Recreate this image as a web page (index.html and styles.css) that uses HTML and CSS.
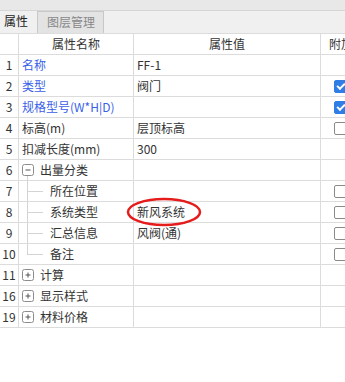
FILE: index.html
```html
<!DOCTYPE html>
<html lang="zh-CN">
<head>
    <meta charset="UTF-8">
    <title>属性</title>
    <link rel="stylesheet" href="styles.css">
</head>
<body>
    <div class="panel">
        <div class="topbar"></div>
        <div class="tabs">
            <div class="tab active">属性</div>
            <div class="tab">图层管理</div>
        </div>

        <div class="grid">
            <div class="row head">
                <div class="cell num"></div>
                <div class="cell name">属性名称</div>
                <div class="cell val">属性值</div>
                <div class="cell extra">附加</div>
            </div>
            <div class="row">
                <div class="cell num">1</div>
                <div class="cell name link">名称</div>
                <div class="cell val">FF-1</div>
                <div class="cell extra"></div>
            </div>
            <div class="row">
                <div class="cell num">2</div>
                <div class="cell name link">类型</div>
                <div class="cell val">阀门</div>
                <div class="cell extra"><span class="check on"></span></div>
            </div>
            <div class="row">
                <div class="cell num">3</div>
                <div class="cell name link">规格型号(W*H|D)</div>
                <div class="cell val"></div>
                <div class="cell extra"><span class="check on"></span></div>
            </div>
            <div class="row">
                <div class="cell num">4</div>
                <div class="cell name">标高(m)</div>
                <div class="cell val">层顶标高</div>
                <div class="cell extra"><span class="check"></span></div>
            </div>
            <div class="row">
                <div class="cell num">5</div>
                <div class="cell name">扣减长度(mm)</div>
                <div class="cell val">300</div>
                <div class="cell extra"></div>
            </div>
            <div class="row">
                <div class="cell num">6</div>
                <div class="cell name group">
                    <span class="toggle open">
                        <svg width="12" height="12" viewBox="0 0 12 12"><rect x="0.5" y="0.5" width="11" height="11" rx="2" fill="#fff" stroke="#8c8c8c"/><path d="M3.5 6h5" stroke="#555" stroke-width="1"/></svg>
                    </span>出量分类
                </div>
                <div class="cell val"></div>
                <div class="cell extra"></div>
            </div>
            <div class="row">
                <div class="cell num">7</div>
                <div class="cell name child">所在位置</div>
                <div class="cell val"></div>
                <div class="cell extra"><span class="check"></span></div>
            </div>
            <div class="row marked">
                <div class="cell num">8</div>
                <div class="cell name child">系统类型</div>
                <div class="cell val">新风系统</div>
                <div class="cell extra"><span class="check"></span></div>
            </div>
            <div class="row">
                <div class="cell num">9</div>
                <div class="cell name child">汇总信息</div>
                <div class="cell val">风阀(通)</div>
                <div class="cell extra"><span class="check"></span></div>
            </div>
            <div class="row">
                <div class="cell num">10</div>
                <div class="cell name child last">备注</div>
                <div class="cell val"></div>
                <div class="cell extra"><span class="check"></span></div>
            </div>
            <div class="row">
                <div class="cell num">11</div>
                <div class="cell name group">
                    <span class="toggle">
                        <svg width="12" height="12" viewBox="0 0 12 12"><rect x="0.5" y="0.5" width="11" height="11" rx="2" fill="#fff" stroke="#8c8c8c"/><path d="M3.5 6h5M6 3.5v5" stroke="#555" stroke-width="1"/></svg>
                    </span>计算
                </div>
                <div class="cell val"></div>
                <div class="cell extra"></div>
            </div>
            <div class="row">
                <div class="cell num">16</div>
                <div class="cell name group">
                    <span class="toggle">
                        <svg width="12" height="12" viewBox="0 0 12 12"><rect x="0.5" y="0.5" width="11" height="11" rx="2" fill="#fff" stroke="#8c8c8c"/><path d="M3.5 6h5M6 3.5v5" stroke="#555" stroke-width="1"/></svg>
                    </span>显示样式
                </div>
                <div class="cell val"></div>
                <div class="cell extra"></div>
            </div>
            <div class="row">
                <div class="cell num">19</div>
                <div class="cell name group">
                    <span class="toggle">
                        <svg width="12" height="12" viewBox="0 0 12 12"><rect x="0.5" y="0.5" width="11" height="11" rx="2" fill="#fff" stroke="#8c8c8c"/><path d="M3.5 6h5M6 3.5v5" stroke="#555" stroke-width="1"/></svg>
                    </span>材料价格
                </div>
                <div class="cell val"></div>
                <div class="cell extra"></div>
            </div>
        </div>

        <!-- red mark around 新风系统 -->
        <svg class="mark" width="76" height="30" viewBox="0 0 76 30">
            <ellipse cx="38" cy="15" rx="36" ry="13" fill="none" stroke="#e51c1c" stroke-width="2.5"/>
        </svg>
    </div>
</body>
</html>
```

FILE: styles.css
```css
body {
    margin: 0;
    background-color: #fff;
    font-family: "Noto Sans CJK SC", "Noto Sans", sans-serif;
    font-size: 12px;
    color: #333;
}
.panel {
    position: relative;
    width: 345px;
    height: 382px;
    overflow: hidden;
}
.topbar {
    height: 10px;
    background-color: #e8e8e8;
    border-bottom: 1px solid #d6d6d6;
}
.tabs {
    display: flex;
    height: 22px;
    background-color: #f0f0f0;
    border-bottom: 1px solid #dcdcdc;
}
.tab {
    box-sizing: border-box;
    height: 22px;
    line-height: 20px;
    padding: 0 8px 0 9px;
    color: #888;
    background-color: #e3e3e3;
    border: 1px solid #c8c8c8;
    border-bottom: none;
}
.tab.active {
    width: 37px;
    padding: 0 0 0 4px;
    color: #222;
    background-color: #f0f0f0;
    border: none;
}
.grid {
    width: 400px;
}
.row {
    display: grid;
    grid-template-columns: 19px 115px 187px 79px;
    height: 21px;
    box-sizing: border-box;
    border-bottom: 1px solid #dcdcdc;
}
.cell {
    box-sizing: border-box;
    border-right: 1px solid #dcdcdc;
    display: flex;
    align-items: center;
    white-space: nowrap;
    line-height: 20px;
}
.num {
    justify-content: center;
    color: #333;
}
.name {
    padding-left: 3px;
}
.val {
    padding-left: 3px;
}
.extra {
    padding-left: 13px;
    border-right: none;
}
.head .name,
.head .val {
    justify-content: center;
    padding-left: 0;
}
.head .extra {
    padding-left: 8px;
}
.link {
    color: #3a5fe8;
}
.toggle {
    display: inline-flex;
    margin-right: 6px;
    position: relative;
}
.toggle.open::after {
    content: "";
    position: absolute;
    left: 5px;
    top: 12px;
    width: 1px;
    height: 6px;
    background-color: #d4d4d4;
}
.child {
    position: relative;
    padding-left: 31px;
}
.child::before {
    content: "";
    position: absolute;
    left: 8px;
    top: 0;
    bottom: 0;
    width: 1px;
    background-color: #d4d4d4;
}
.child.last::before {
    bottom: 50%;
}
.child::after {
    content: "";
    position: absolute;
    left: 8px;
    top: 10px;
    width: 16px;
    height: 1px;
    background-color: #d4d4d4;
}
.check {
    box-sizing: border-box;
    width: 13px;
    height: 13px;
    border: 1px solid #8a8a8a;
    border-radius: 2px;
    background-color: #fff;
    position: relative;
}
.check.on {
    border-color: #2f7ee6;
    background-color: #2f7ee6;
}
.check.on::after {
    content: "";
    position: absolute;
    left: 2px;
    top: 2px;
    width: 6px;
    height: 3px;
    border-left: 2px solid #fff;
    border-bottom: 2px solid #fff;
    transform: rotate(-45deg);
}
.mark {
    position: absolute;
    left: 126px;
    top: 197px;
}
```
